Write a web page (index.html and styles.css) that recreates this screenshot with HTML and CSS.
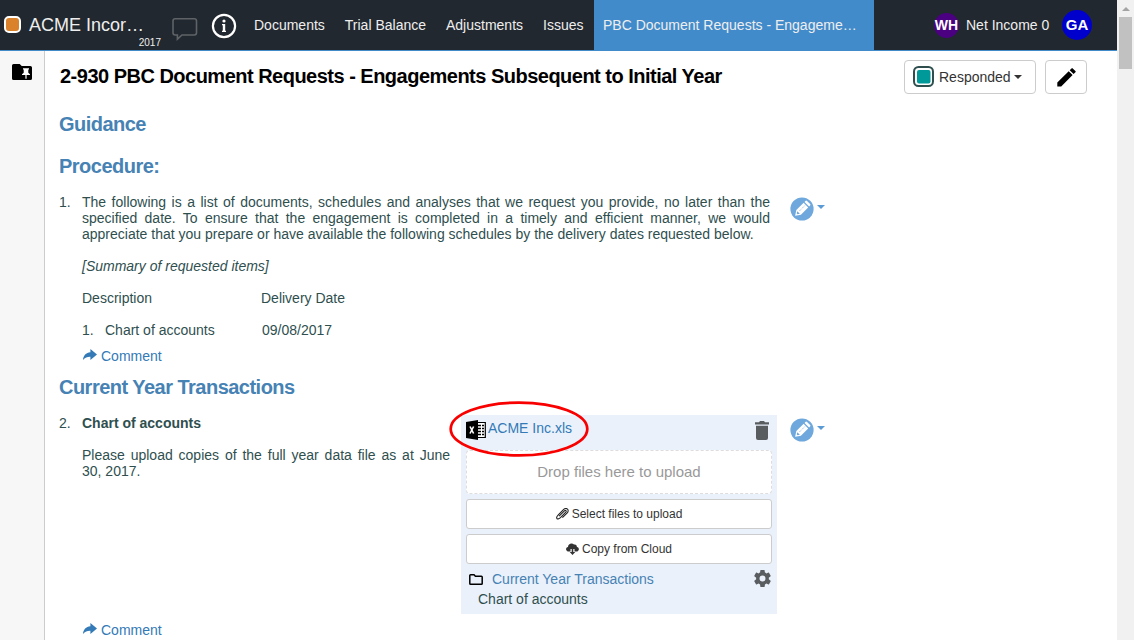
FILE: index.html
```html
<!DOCTYPE html>
<html lang="en">
<head>
<meta charset="utf-8">
<title>PBC Document Requests</title>
<link rel="stylesheet" href="styles.css">
</head>
<body>
<svg class="defs" width="0" height="0">
  <symbol id="pencil-circle" viewBox="0 0 24 24"><circle cx="12" cy="12" r="11.6" fill="#6fa8dc"/><g transform="translate(12 12) rotate(45) scale(1.08)" fill="#fff"><path d="M-3-7.8Q-3-8.6-2-8.6H2Q3-8.6 3-7.8V-6.3H-3ZM-3-5.1H3V4.4L0 9-3 4.4Z"/><path d="M-.4-4V4" stroke="#6fa8dc" stroke-width=".7" stroke-dasharray="1 1"/><path d="M-1.7 4.5H1.7L.5 6.4H-.5Z" fill="#6fa8dc"/></g></symbol>
  <symbol id="share" viewBox="0 0 14 12"><path d="M7.4 0 14 5.4 7.4 11V7.8C4.4 7.7 2 8.6 0 11 .3 6.6 3 3.6 7.4 3.3Z" fill="#337ab7"/></symbol>
</svg>
<div class="window">
  <div class="app">
    <header class="topbar">
      <div class="client"><span class="client-mark"></span><span class="client-name">ACME Incor…</span><span class="client-year">2017</span></div>
      <svg class="chat" width="26" height="24" viewBox="0 0 26 24"><path d="M3.2 1.7H22.3Q24.5 1.7 24.5 3.9V15.8Q24.5 18 22.3 18H10L5.4 22.2V18H3.2Q1 18 1 15.8V3.9Q1 1.7 3.2 1.7Z" fill="none" stroke="#5f6368" stroke-width="1.6"/></svg>
      <svg class="info" width="26" height="26" viewBox="0 0 26 26"><circle cx="13" cy="13" r="11.1" fill="none" stroke="#fff" stroke-width="2.2"/><circle cx="13" cy="8" r="1.6" fill="#fff"/><path d="M11 11H14.2V17.8H15V19H11V17.8H11.8V12.2H11Z" fill="#fff"/></svg>
      <nav class="nav"><a>Documents</a><a>Trial Balance</a><a>Adjustments</a><a>Issues</a></nav>
      <div class="tab">PBC Document Requests - Engageme…</div>
      <div class="account"><span class="avatar wh">WH</span><span class="income">Net Income 0</span><span class="avatar ga">GA</span></div>
    </header>
    <div class="body">
      <aside class="side"><svg width="20" height="17" viewBox="0 0 20 17"><path d="M1.6 0H7.7L9.7 2H18.4Q20 2 20 3.6V14.4Q20 16 18.4 16H1.6Q0 16 0 14.4V1.6Q0 0 1.6 0Z"/><path d="M11 4.2H17V5.4H16.3V8.8L18 10.2V11H14.6V14.7H13.4V11H10V10.2L11.7 8.8V5.4H11Z" fill="#fff"/></svg></aside>
      <main class="content">
        <div class="title-row">
          <h1>2-930 PBC Document Requests - Engagements Subsequent to Initial Year</h1>
          <div class="btn responded"><svg width="22" height="22" viewBox="0 0 22 22"><rect x="1" y="1" width="19" height="19" rx="4.5" fill="#fff" stroke="#2f4f4f" stroke-width="2"/><rect x="4" y="4" width="13.5" height="13.5" rx="2" fill="#009999"/></svg><span>Responded</span><i class="caret"></i></div>
          <div class="btn edit"><svg width="19" height="19" viewBox="0 0 19 19"><path d="M.3 18.5V14.6L11.7 3.2 15.6 7.1 4.2 18.5ZM12.7 2.2 14.5.4Q15.1-.2 15.7.4L18.4 3.1Q19 3.7 18.4 4.3L16.6 6.1Z"/></svg></div>
        </div>
        <h2 class="guidance">Guidance</h2>
        <h2 class="procedure">Procedure:</h2>
        <section class="item first">
          <span class="num">1.</span>
          <div class="text wide">
            <p>The following is a list of documents, schedules and analyses that we request you provide, no later than the specified date. To ensure that the engagement is completed in a timely and efficient manner, we would appreciate that you prepare or have available the following schedules by the delivery dates requested below.</p>
            <p><em>[Summary of requested items]</em></p>
            <div class="table"><span>Description</span><span>Delivery Date</span></div>
            <div class="table row"><span><b>1.</b>Chart of accounts</span><span>09/08/2017</span></div>
          </div>
          <div class="actions"><svg width="24" height="24"><use href="#pencil-circle"/></svg><i class="caret"></i></div>
        </section>
        <a class="comment"><svg width="14" height="12"><use href="#share"/></svg>Comment</a>
        <h2 class="transactions">Current Year Transactions</h2>
        <section class="item second">
          <span class="num">2.</span>
          <div class="text narrow">
            <p><strong>Chart of accounts</strong></p>
            <p>Please upload copies of the full year data file as at June 30, 2017.</p>
          </div>
          <div class="upload">
            <div class="file">
              <svg width="20" height="20" viewBox="0 0 20 20"><path d="M12 2.5H19.3V17.5H12" fill="#fff" stroke="#000" stroke-width="1.2"/><path d="M12 5.5H18M12 8.5H18M12 11.5H18M12 14.5H18" stroke="#000" stroke-width="1.3"/><path d="M15.5 3V17" stroke="#fff"/><path d="M0 2 12 0V20L0 18Z"/><path d="M4 6.5 7.6 13.5M7.6 6.5 4 13.5" stroke="#fff" stroke-width="1.6"/></svg>
              <a>ACME Inc.xls</a>
              <svg class="trash" width="14" height="19" viewBox="0 0 14 19"><path d="M0 1.3H4L5 0H9L10 1.3H14V3.4H0ZM1 4.8H13V17Q13 19 11 19H3Q1 19 1 17Z" fill="#595d60"/></svg>
              <svg class="ring" width="140" height="56" viewBox="0 0 140 56"><ellipse cx="70" cy="28" rx="68.3" ry="26.4" fill="none" stroke="#f80000" stroke-width="2.7"/></svg>
            </div>
            <div class="drop">Drop files here to upload</div>
            <div class="wide-btn"><svg width="13" height="12" viewBox="0 0 13 12"><path d="M3.1 8.2 8.4 2.9C9.6 1.8 10.8 3 9.8 4.1L5.2 8.8C3.6 10.5 1.4 11.8.8 10.2.2 9.1 1.2 7.9 2.3 6.8L7.2 1.9C8.6.5 10.4.1 11.5 1.2 12.6 2.2 12.2 3.9 11 5.1L6.4 9.7" fill="none" stroke="#222" stroke-width="1.1"/></svg>Select files to upload</div>
            <div class="wide-btn"><svg width="13" height="12" viewBox="0 0 13 12"><path d="M3 8.5C-.7 8.5-.8 4.5 2 4 1.9.9 5.8-.7 8 1.5 9.9 1 11 2.3 10.9 4 13.8 4.5 13.4 8.5 10.2 8.5H8.5V6H4.5V8.5Z" fill="#333"/><path d="M5.7 5.5H7.3V9H9.3L6.5 12 3.7 9H5.7Z" fill="#333"/></svg>Copy from Cloud</div>
            <div class="folder"><svg width="14" height="11" viewBox="0 0 14 11"><path d="M.8 9.4V1.6Q.8.8 1.6.8H5L6.4 2.3H12.4Q13.2 2.3 13.2 3.1V9.4Q13.2 10.2 12.4 10.2H1.6Q.8 10.2.8 9.4Z" fill="none" stroke="#000" stroke-width="1.5"/></svg><a>Current Year Transactions</a>
              <svg class="gear" width="17" height="17" viewBox="2 2 20 20"><path fill="#595d60" d="M19.4 13c.04-.3.06-.6.06-1s-.02-.7-.06-1l2.1-1.65a.5.5 0 0 0 .12-.64l-2-3.46a.5.5 0 0 0-.61-.22l-2.49 1a7.3 7.3 0 0 0-1.69-.98l-.38-2.65A.49.49 0 0 0 14 2h-4a.49.49 0 0 0-.49.42l-.38 2.65c-.61.25-1.17.59-1.69.98l-2.49-1a.5.5 0 0 0-.61.22l-2 3.46a.5.5 0 0 0 .12.64L4.57 11a8 8 0 0 0 0 2l-2.11 1.65a.5.5 0 0 0-.12.64l2 3.46c.12.22.39.3.61.22l2.49-1c.52.4 1.08.73 1.69.98l.38 2.65c.03.24.24.42.49.42h4c.25 0 .46-.18.49-.42l.38-2.65c.61-.25 1.17-.59 1.69-.98l2.49 1c.23.09.49 0 .61-.22l2-3.46a.5.5 0 0 0-.12-.64ZM12 15.5a3.5 3.5 0 1 1 0-7 3.5 3.5 0 0 1 0 7Z"/></svg></div>
            <div class="doc">Chart of accounts</div>
          </div>
          <div class="actions"><svg width="24" height="24"><use href="#pencil-circle"/></svg><i class="caret"></i></div>
        </section>
        <a class="comment last"><svg width="14" height="12"><use href="#share"/></svg>Comment</a>
      </main>
    </div>
  </div>
  <div class="scrollbar"><i class="up"></i><div class="thumb"></div></div>
</div>
</body>
</html>
```
FILE: styles.css
```css
* { box-sizing: border-box; }
body { margin: 0; font: 14px/16px "Liberation Sans", Arial, sans-serif; color: #2f4f4f; background: #fff; overflow: hidden; }
p, h1, h2 { margin: 0; }
svg { display: block; flex: none; }
.defs { position: absolute; }
.window { display: flex; width: 1134px; height: 640px; overflow: hidden; }
.app { display: flex; flex-direction: column; width: 1117px; }
.topbar { display: flex; height: 51px; flex: none; background: #22282f; border-bottom: 1px solid #428bca; color: #eee; white-space: nowrap; }
.client { display: grid; grid-template-columns: 25px 136px; grid-template-rows: 36px 14px; width: 171px; padding-left: 4px; }
.client-mark { width: 17px; height: 17px; margin-top: 16px; border: 2px solid #fff; border-radius: 5px; background: #d9822b; }
.client-name { font-size: 18px; line-height: 20px; padding-top: 15px; }
.client-year { grid-column: 2; font-size: 10px; line-height: 14px; text-align: right; padding-right: 4px; }
.chat { margin: 17px 0 0 1px; }
.info { margin: 13px 0 0 13px; }
.nav { display: flex; width: 357px; padding: 17px 0 0 17px; gap: 20px; }
.tab { width: 280px; height: 51px; padding: 17px 0 0 9px; background: #428bca; font-size: 14px; }
.account { display: flex; align-items: center; padding-left: 60px; }
.avatar { display: flex; align-items: center; justify-content: center; border-radius: 50%; font-weight: bold; color: #fff; }
.wh { width: 25px; height: 25px; background: #4b0082; font-size: 14px; }
.ga { width: 30px; height: 30px; background: #0000cd; font-size: 15px; }
.income { width: 103px; padding-left: 7px; }
.body { display: flex; flex: 1; min-height: 0; }
.side { width: 45px; padding: 13px 0 0 12px; background: #f7f7f7; border-right: 1px solid #ccc; }
.content { display: flex; flex-direction: column; width: 1072px; padding-left: 14px; }
.title-row { display: flex; height: 52px; padding-top: 9px; }
h1 { width: 845px; padding: 5px 0 0 1px; font-size: 20px; line-height: 22px; letter-spacing: -.51px; color: #000; white-space: nowrap; }
.btn { display: flex; align-items: center; height: 34px; border: 1px solid #ccc; border-radius: 4px; color: #333; }
.responded { width: 132px; padding-left: 8px; }
.responded span { margin: 0 3px 0 4px; }
.caret { width: 0; height: 0; border: 4px solid transparent; border-top-color: currentColor; border-bottom: 0; }
.edit { width: 42px; margin-left: 9px; justify-content: center; }
h2 { height: 42px; flex: none; font-size: 20px; line-height: 43px; letter-spacing: -.52px; color: #4682b4; white-space: nowrap; }
.item { display: flex; flex: none; }
.first { height: 154px; padding-top: 7px; }
.num { width: 23px; }
.text { display: flex; flex-direction: column; gap: 16px; }
.text p { text-align: justify; }
.wide { width: 688px; }
.narrow { width: 368px; }
.table { display: grid; grid-template-columns: 179px 1fr; }
.table.row { grid-template-columns: 180px 1fr; }
.table b { display: inline-block; width: 23px; font-weight: normal; }
.actions { display: flex; gap: 3px; height: 24px; margin: 3px 0 0 20px; color: #5b9bd5; }
.second .actions { margin-left: 13px; }
.actions .caret { margin-top: 8px; }
.comment { display: flex; gap: 4px; height: 16px; flex: none; margin-left: 24px; color: #337ab7; }
.comment svg { margin-top: 1px; }
.first + .comment { margin-top: 7px; }
.transactions { margin-top: 2px; }
.second { height: 206px; padding-top: 7px; }
.upload { width: 316px; height: 199px; margin-left: 11px; padding: 0 5px; background: #eaf1fa; }
.upload a { color: #337ab7; }
.file { position: relative; display: flex; height: 35px; padding-top: 5px; gap: 2px; }
.file a { flex: 1; }
.trash { margin: 1px 3px 0 0; }
.ring { position: absolute; left: -17px; top: -14px; z-index: 2; }
.drop { height: 44px; border: 1px dashed #ddd; border-radius: 4px; background: #fff; color: #999; font-size: 15px; line-height: 42px; text-align: center; }
.wide-btn { display: flex; align-items: center; justify-content: center; gap: 3px; height: 30px; margin-top: 5px; border: 1px solid #ccc; border-radius: 3px; background: #fff; color: #333; font-size: 12px; }
.folder { display: flex; height: 27px; padding: 7px 0 0 3px; }
.folder a { flex: 1; margin-left: 9px; color: #4682b4; }
.folder > svg:first-child { margin-top: 3px; }
.folder .gear { margin: -1px 1px 0 0; }
.doc { margin-left: 12px; }
.last { margin-top: 8px; }
.scrollbar { display: flex; flex-direction: column; align-items: center; width: 17px; background: #f1f1f1; }
.up { width: 0; height: 0; margin-top: 7px; border: 4px solid transparent; border-bottom-color: #a3a3a3; border-top: 0; }
.thumb { width: 13px; height: 52px; margin-top: 6px; background: #c1c1c1; }
```
